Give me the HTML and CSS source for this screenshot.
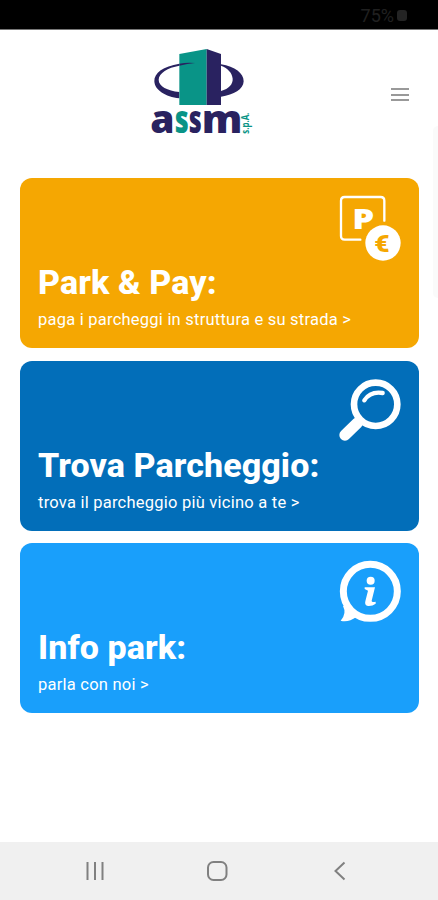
FILE: index.html
```html
<!DOCTYPE html>
<html lang="it">
<head>
    <meta charset="UTF-8">
    <meta name="viewport" content="width=device-width, initial-scale=1.0">
    <title>ASSM Park</title>
    <link rel="stylesheet" href="styles.css">
</head>
<body>
    <div class="status-bar">
        <span>75%</span>
        <span class="battery"></span>
    </div>

    <header class="header">
        <svg class="logo" width="120" height="100" viewBox="0 0 360 300">
            <path class="navy" d="M118 71C70 79 42 98 43 124C44 150 76 171 118 175V156C82 152 56 139 56 119C57 99 83 83 118 77Z"/>
            <path class="navy" d="M243 73C285 80 311 100 311 124C310 148 282 165 243 170V153C267 146 279 132 278 116C277 99 264 85 243 77Z"/>
            <path class="teal" d="M118 42L200 27V195H118Z"/>
            <path class="navy" d="M200 27L243 42V195H200Z"/>
            <path class="navy" d="M118 71Q142 66 165 69Q142 71 118 77Z"/>
            <text class="logo-text" x="31" y="279" textLength="73" lengthAdjust="spacingAndGlyphs">a</text>
            <text class="logo-text teal" x="104" y="279" textLength="42" lengthAdjust="spacingAndGlyphs">s</text>
            <text class="logo-text" x="146" y="279" textLength="39" lengthAdjust="spacingAndGlyphs">s</text>
            <text class="logo-text" x="185" y="279" textLength="122" lengthAdjust="spacingAndGlyphs">m</text>
            <text class="logo-spa" transform="translate(328 281) rotate(-90)" textLength="63" lengthAdjust="spacingAndGlyphs">s.p.A.</text>
        </svg>
        <button class="menu" aria-label="Menu">
            <span></span>
            <span></span>
            <span></span>
        </button>
    </header>

    <main class="cards">
        <a class="card orange">
            <svg class="icon" width="100" height="90" viewBox="0 0 300 270">
                <path class="line" d="M91 164H44Q33 164 33 153V47Q33 36 44 36H152Q163 36 163 47V107" stroke-width="7"/>
                <text class="icon-p" x="67" y="132" textLength="66" lengthAdjust="spacingAndGlyphs">P</text>
                <circle cx="159" cy="174" r="53" fill="#fff"/>
                <text class="icon-euro" x="133" y="200" textLength="46" lengthAdjust="spacingAndGlyphs">€</text>
            </svg>
            <h2>Park &amp; Pay:</h2>
            <p>paga i parcheggi in struttura e su strada &gt;</p>
        </a>
        <a class="card blue">
            <svg class="icon" width="100" height="90" viewBox="0 0 300 270">
                <circle class="line" cx="137" cy="115" r="65" stroke-width="20"/>
                <path class="line" d="M103 103Q121 75 158 81" stroke-width="13"/>
                <path class="line" d="M82 171L45 207" stroke-width="34"/>
            </svg>
            <h2>Trova Parcheggio:</h2>
            <p>trova il parcheggio più vicino a te &gt;</p>
        </a>
        <a class="card light">
            <svg class="icon" width="100" height="90" viewBox="0 0 300 270">
                <circle class="line" cx="121" cy="124" r="81" stroke-width="21"/>
                <path d="M39 168Q51 191 32 212Q55 218 79 201L57 164Z" fill="#fff"/>
                <circle cx="122" cy="92" r="12" fill="#fff"/>
                <path d="M104 112H135L125 152Q124 158 137 155V161Q127 169 114 168Q103 166 106 154L114 122L104 117Z" fill="#fff"/>
            </svg>
            <h2>Info park:</h2>
            <p>parla con noi &gt;</p>
        </a>
    </main>

    <div class="edge-handle"></div>

    <nav class="nav-bar">
        <svg width="438" height="58" viewBox="0 0 438 58">
            <path d="M87.5 20V38M95 20V38M102.5 20V38"/>
            <rect x="208" y="20" width="18.5" height="18" rx="5.5"/>
            <path d="M344.5 20.5L335.5 29L344.5 37.5"/>
        </svg>
    </nav>
</body>
</html>
```
FILE: styles.css
```css
body {
    font-family: Roboto, sans-serif;
    background-color: #fff;
    margin: 0;
    height: 900px;
    display: flex;
    flex-direction: column;
    overflow: hidden;
}
.status-bar {
    display: flex;
    align-items: center;
    justify-content: flex-end;
    gap: 3px;
    box-sizing: border-box;
    height: 30px;
    padding: 2px 31px 0 0;
    background-color: #000;
    border-bottom: 1px solid #777;
    color: #202020;
    font-size: 18px;
}
.battery {
    width: 10px;
    height: 11px;
    border-radius: 3px;
    background-color: #242424;
}
.header {
    display: flex;
    align-items: center;
    justify-content: space-between;
    height: 100px;
    padding: 10px 29px 38px 140px;
}
.logo {
    overflow: visible;
}
.navy {
    fill: #292260;
}
.logo-text {
    font-family: "Open Sans", sans-serif;
    font-weight: 800;
    font-size: 117px;
    fill: #292260;
}
.teal {
    fill: #099487;
}
.logo-spa {
    font-family: "Open Sans", sans-serif;
    font-weight: 700;
    font-size: 31px;
    fill: #099487;
}
.menu {
    display: flex;
    flex-direction: column;
    gap: 3.5px;
    width: 18px;
    margin-top: 9px;
    padding: 0;
    border: none;
    background: none;
}
.menu span {
    height: 2px;
    background-color: #999;
}
.cards {
    display: flex;
    flex-direction: column;
    gap: 12.5px;
    padding: 0 19px 0 20px;
}
.card {
    position: relative;
    display: flex;
    flex-direction: column;
    justify-content: flex-end;
    box-sizing: border-box;
    height: 170px;
    padding: 0 18px 18px;
    border-radius: 12px;
    color: #fff;
}
.orange {
    background-color: #f5a702;
}
.blue {
    background-color: #026eb9;
}
.light {
    background-color: #199ffb;
}
.icon {
    position: absolute;
    top: 7px;
    right: -11px;
}
.blue .icon {
    top: 5px;
}
.line {
    fill: none;
    stroke: #fff;
    stroke-linecap: round;
    stroke-linejoin: round;
}
.icon-p {
    font-family: "Open Sans", sans-serif;
    font-weight: 800;
    font-size: 84px;
    fill: #fff;
}
.icon-euro {
    font-family: Roboto, sans-serif;
    font-weight: 900;
    font-size: 74px;
    fill: #f5a702;
}
.card h2 {
    margin: 0 0 8px;
    font-size: 34px;
    line-height: 40px;
    font-weight: 800;
    letter-spacing: 0.1px;
    white-space: nowrap;
}
.card p {
    margin: 0;
    font-size: 16.5px;
    line-height: 20px;
    letter-spacing: 0.23px;
    white-space: nowrap;
}
.edge-handle {
    position: absolute;
    top: 126px;
    right: 0;
    width: 5px;
    height: 172px;
    border-radius: 5px 0 0 5px;
    background-color: #fafafa;
}
.nav-bar {
    height: 58px;
    margin-top: auto;
    background-color: #f0f0f0;
}
.nav-bar svg {
    display: block;
    fill: none;
    stroke: #808080;
    stroke-width: 2;
}
```
